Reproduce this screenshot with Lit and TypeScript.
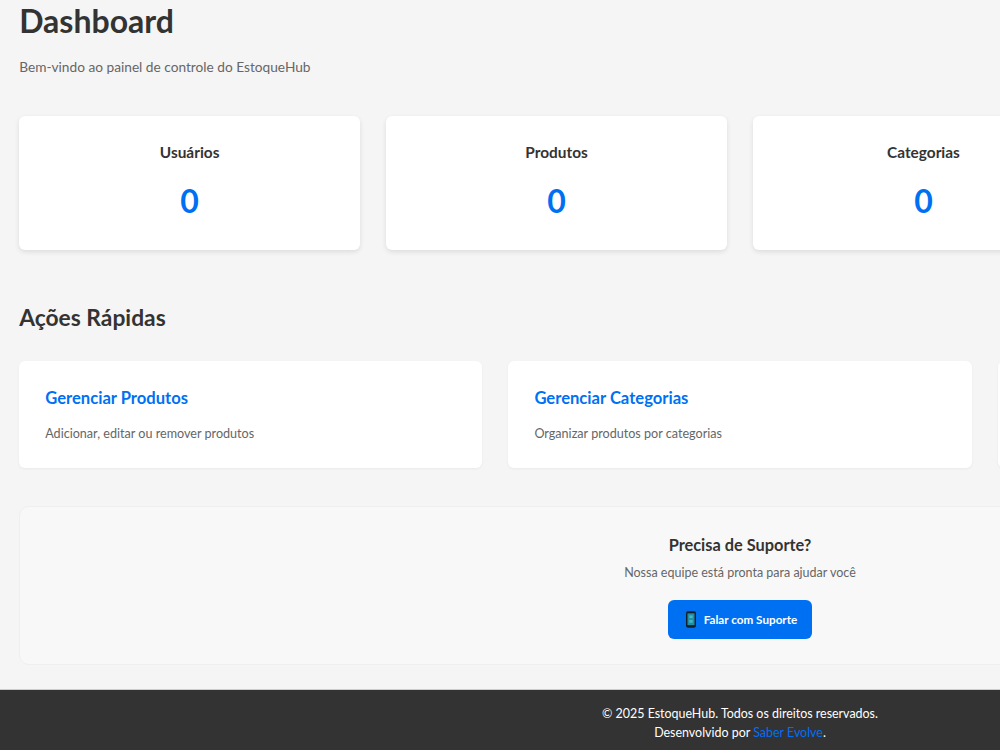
import { LitElement, css, html } from "lit";
import { customElement } from "lit/decorators.js";

const stats = ["Usuários", "Produtos", "Categorias", "Estoque"];
const actions = [
  { title: "Gerenciar Produtos", text: "Adicionar, editar ou remover produtos" },
  { title: "Gerenciar Categorias", text: "Organizar produtos por categorias" },
  { title: "Relatórios", text: "Visualizar relatórios do estoque" },
];

@customElement("app-root")
export class AppRoot extends LitElement {
  render() {
    return html`
      <div class="page">
        <main class="content">
          <h1>Dashboard</h1>
          <p class="welcome">Bem-vindo ao painel de controle do EstoqueHub</p>

          <section class="stats">
            ${stats.map(
              (label) => html`
                <div class="stat">
                  <h3>${label}</h3>
                  <div class="value">0</div>
                </div>
              `
            )}
          </section>

          <h2>Ações Rápidas</h2>

          <section class="actions">
            ${actions.map(
              (a) => html`
                <a class="action">
                  <h4>${a.title}</h4>
                  <p>${a.text}</p>
                </a>
              `
            )}
          </section>

          <section class="support">
            <h3>Precisa de Suporte?</h3>
            <p>Nossa equipe está pronta para ajudar você</p>
            <button>
              <svg width="10" height="17" viewBox="0 0 11 18">
                <rect x="0" y="0" width="11" height="18" rx="2" fill="#12202a" />
                <rect x="1.6" y="2.2" width="7.8" height="13" fill="#1f8fa8" />
                <rect x="3.6" y="4.5" width="3.8" height="3" fill="#45b6c8" />
                <rect x="3.6" y="9.5" width="3.8" height="3" fill="#45b6c8" />
              </svg>
              <span>Falar com Suporte</span>
            </button>
          </section>
        </main>

        <footer>
          <div>© 2025 EstoqueHub. Todos os direitos reservados.</div>
          <div>Desenvolvido por <a>Saber Evolve</a>.</div>
        </footer>
      </div>
    `;
  }

  static styles = css`
    :host {
      display: block;
      width: 1000px;
      height: 750px;
      overflow: hidden;
      background: #f5f5f5;
      font-family: Lato, "Liberation Sans", sans-serif;
      color: #333;
    }

    .page {
      width: 1480px;
      display: flex;
      flex-direction: column;
    }

    .content {
      padding: 0 19.2px;
    }

    h1 {
      margin: 0;
      height: 44px;
      font-size: 32px;
      line-height: 42px;
      font-weight: 700;
      color: #333;
    }

    .welcome {
      margin: 13px 0 0;
      height: 21px;
      font-size: 13.7px;
      line-height: 20px;
      color: #666;
    }

    .stats {
      margin-top: 38px;
      display: grid;
      grid-template-columns: repeat(4, 1fr);
      gap: 26px;
    }

    .stat {
      height: 134px;
      box-sizing: border-box;
      padding-top: 26px;
      background: #fff;
      border-radius: 6px;
      box-shadow: 0 2px 5px rgba(0, 0, 0, 0.1);
      text-align: center;
    }

    .stat h3 {
      margin: 0;
      font-size: 15.4px;
      line-height: 21px;
      font-weight: 700;
      color: #333;
    }

    .value {
      margin-top: 15px;
      font-size: 32px;
      line-height: 45px;
      font-weight: 700;
      color: #0070f3;
    }

    h2 {
      margin: 51px 0 0;
      height: 34px;
      font-size: 22.8px;
      line-height: 32px;
      font-weight: 700;
      color: #333;
    }

    .actions {
      margin-top: 26px;
      display: grid;
      grid-template-columns: repeat(3, 1fr);
      gap: 26px;
    }

    .action {
      height: 107px;
      box-sizing: border-box;
      padding: 26px;
      background: #fff;
      border-radius: 6px;
      box-shadow: 0 1px 3px rgba(0, 0, 0, 0.05);
    }

    .action h4 {
      margin: 0;
      font-size: 16.6px;
      line-height: 23px;
      font-weight: 700;
      color: #0070f3;
    }

    .action p {
      margin: 14px 0 0;
      font-size: 12.6px;
      line-height: 19px;
      color: #666;
    }

    .support {
      margin-top: 38px;
      height: 159px;
      box-sizing: border-box;
      padding-top: 27px;
      background: #f8f8f8;
      border: 1px solid #efefef;
      border-radius: 10px;
      display: flex;
      flex-direction: column;
      align-items: center;
    }

    .support h3 {
      margin: 0;
      font-size: 16.35px;
      line-height: 22px;
      font-weight: 700;
      color: #333;
    }

    .support p {
      margin: 7px 0 0;
      font-size: 12.5px;
      line-height: 19px;
      color: #666;
    }

    button {
      margin-top: 18px;
      width: 144px;
      height: 39px;
      padding: 0;
      border: none;
      border-radius: 6px;
      background: #0070f3;
      color: #fff;
      font-family: inherit;
      font-size: 11.7px;
      font-weight: 700;
      display: flex;
      align-items: center;
      justify-content: center;
      gap: 8px;
    }

    button svg {
      margin-left: 3px;
    }

    button span {
      margin-bottom: 2px;
    }

    footer {
      margin-top: 24px;
      height: 61px;
      box-sizing: border-box;
      padding-top: 14px;
      background: #333;
      border-top: 1px solid #ccc;
      color: #fff;
      text-align: center;
      font-size: 12.45px;
      line-height: 19px;
    }

    footer a {
      color: #0070f3;
    }
  `;
}
